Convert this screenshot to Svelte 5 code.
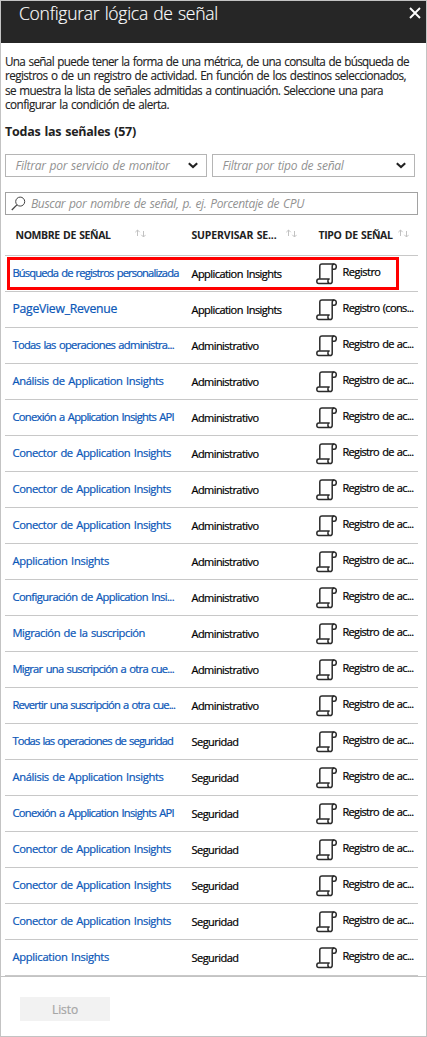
<script>
  const intro = [
    ['Una señal puede tener la forma de una métrica, de una consulta de búsqueda de', 404],
    ['registros o de un registro de actividad. En función de los destinos seleccionados,', 401],
    ['se muestra la lista de señales admitidas a continuación. Seleccione una para', 378],
    ['configurar la condición de alerta.', 164]
  ];
  const columns = [
    { label: 'NOMBRE DE SEÑAL', width: 95 },
    { label: 'SUPERVISAR SE...', width: 85 },
    { label: 'TIPO DE SEÑAL', width: 74 }
  ];
  const signals = [
    ['Todas las operaciones administra...', 161.5],
    ['Análisis de Application Insights', 151],
    ['Conexión a Application Insights API', 161.5],
    ['Conector de Application Insights', 158.5],
    ['Conector de Application Insights', 158.5],
    ['Conector de Application Insights', 158.5],
    ['Application Insights', 96.5],
    ['Configuración de Application Insi...', 161.5],
    ['Migración de la suscripción', 132.5],
    ['Migrar una suscripción a otra cue...', 161.5],
    ['Revertir una suscripción a otra cue...', 162.5]
  ];
  const security = [['Todas las operaciones de seguridad', 160.5], ...signals.slice(1, 7)];
  const monitors = { 'Application Insights': 90, Administrativo: 67, Seguridad: 47 };
  const kinds = { Registro: 38, 'Registro (cons...': 71, 'Registro de ac...': 71 };

  const rows = [
    { name: 'Búsqueda de registros personalizada', width: 166, monitor: 'Application Insights', kind: 'Registro', selected: true },
    { name: 'PageView_Revenue', width: 104.5, monitor: 'Application Insights', kind: 'Registro (cons...', large: true },
    ...signals.map(([name, width]) => ({ name, width, monitor: 'Administrativo', kind: 'Registro de ac...' })),
    ...security.map(([name, width]) => ({ name, width, monitor: 'Seguridad', kind: 'Registro de ac...' }))
  ];

  // Adjusts tracking so that a label takes up the given width.
  function fit(node, width) {
    const natural = node.getBoundingClientRect().width;
    node.style.letterSpacing = `${(width - natural) / node.textContent.length}px`;
  }
</script>

{#snippet chevron()}
  <svg class="chevron" width="10" height="7" viewBox="0 0 10 7"><path d="M.8 1.2 5 5 9.2 1.2" fill="none" stroke="#222" stroke-width="2.1" /></svg>
{/snippet}

<div class="blade">
  <header>
    <h1><span use:fit={199}>Configurar lógica de señal</span></h1>
    <svg class="close" width="12" height="12" viewBox="0 0 12 12"><path d="M1 1 11 11M11 1 1 11" stroke="#fff" stroke-width="1.9" /></svg>
  </header>

  <main>
    <div class="intro">
      {#each intro as [text, width]}
        <div><span use:fit={width}>{text}</span></div>
      {/each}
    </div>
    <h2><span use:fit={131}>Todas las señales (57)</span></h2>

    <div class="filters">
      <div class="field first"><span use:fit={154}>Filtrar por servicio de monitor</span>{@render chevron()}</div>
      <div class="field"><span use:fit={121}>Filtrar por tipo de señal</span>{@render chevron()}</div>
    </div>
    <div class="field search">
      <svg width="15" height="15" viewBox="0 0 15 15" fill="none" stroke="#444"><circle cx="9.2" cy="5.6" r="4.5" stroke-width="1" /><path d="M5.9 8.9 .8 14" stroke-width="1.3" /></svg>
      <span use:fit={273}>Buscar por nombre de señal, p. ej. Porcentaje de CPU</span>
    </div>

    <div class="head grid">
      {#each columns as column}
        <div class="cell">
          <span use:fit={column.width}>{column.label}</span>
          <svg class="sort" width="11" height="9" viewBox="0 0 11 9" fill="none" stroke="#c2c2c2" stroke-width="1"><path d="M2.5 7V1M.3 3.2 2.5 1 4.7 3.2M8.5 2v6M6.3 5.8 8.5 8l2.2-2.2" /></svg>
        </div>
      {/each}
    </div>

    {#each rows as row}
      <div class="row grid" class:selected={row.selected}>
        <div class="name" class:large={row.large}><span use:fit={row.width}>{row.name}</span></div>
        <div class="monitor"><span use:fit={monitors[row.monitor]}>{row.monitor}</span></div>
        <div class="kind">
          <svg width="21" height="22" viewBox="0 0 21 22" fill="none" stroke="#2b2b2b" stroke-width="1.5" stroke-linejoin="round">
            <path d="M3.8 15.8V3.2Q3.8 1 6 1H18.3" />
            <path d="M16.2 6.2H18.2A2.1 2.6 0 0 0 18.2 1Q16.2 1 16.2 3.4V18.2Q16.2 20.6 14 20.6" />
            <path d="M13.2 16H2.8Q.8 16 .8 18.3T2.8 20.6H14Q11.8 20 11.9 18T13.2 16Z" />
          </svg>
          <span use:fit={kinds[row.kind]}>{row.kind}</span>
        </div>
      </div>
    {/each}
  </main>

  <footer><button disabled><span use:fit={26}>Listo</span></button></footer>
</div>

<style>
  :global(body) { margin: 0; background: #fff; }
  .blade {
    box-sizing: border-box;
    width: 427px;
    height: 1037px;
    border: 1px solid #c3c3c3;
    display: flex;
    flex-direction: column;
    overflow: hidden;
    background: #fff;
    color: #222;
    font-family: "Open Sans", "Noto Sans", sans-serif;
    font-size: 11.2px;
    white-space: nowrap;
    word-spacing: 1px;
  }
  svg { display: block; flex: none; }
  h1, h2 { margin: 0; }
  header {
    height: 42px;
    flex: none;
    display: flex;
    justify-content: space-between;
    align-items: flex-start;
    padding: 0 5px 0 18px;
    background: #262626;
    color: #fff;
  }
  h1 { font-size: 17.5px; font-weight: 300; line-height: 25px; -webkit-text-stroke: 0.15px; }
  .close { margin-top: 6px; }
  main { flex: 1; min-height: 0; padding: 11px 8px 0 4px; }
  .intro { font-size: 11.7px; line-height: 14.33px; -webkit-text-stroke: 0.12px; }
  h2 { margin-top: 11px; font-size: 12.5px; line-height: 19px; font-weight: 700; }
  .filters { display: flex; gap: 5px; margin-top: 13px; }
  .field {
    box-sizing: border-box;
    width: 203px;
    height: 23px;
    display: flex;
    align-items: center;
    justify-content: space-between;
    padding: 0 8px 0 10px;
    border: 1px solid #b5b5b5;
    color: #929292;
    font-size: 12px;
    font-style: italic;
    line-height: 20px;
  }
  .first { width: 202px; }
  .search { width: 413px; margin-top: 15px; justify-content: flex-start; gap: 5px; padding-left: 5px; border-color: #a2a2a2; }
  .first span, .field:nth-child(2) span { margin-left: -0.5px; }
  .grid { display: grid; grid-template-columns: 186.5px 124.5px 102px; }
  .head { height: 40px; font-size: 10.5px; font-weight: 700; line-height: 40px; }
  .cell { display: flex; }
  .cell:nth-child(1) { padding-left: 10.5px; gap: 24.5px; }
  .cell:nth-child(2) { gap: 9.5px; }
  .cell:nth-child(3) { padding-left: 2.5px; gap: 5.5px; }
  .sort { margin-top: 14px; }
  .row { position: relative; height: 36px; box-sizing: border-box; border-top: 1px solid #c8c8c8; color: #000; -webkit-text-stroke: 0.22px; }
  .row:last-child { height: 37px; border-bottom: 1px solid #c8c8c8; }
  .selected::after { content: ""; position: absolute; left: 2px; top: 1px; width: 386px; height: 27px; border: 3px solid #f00; }
  .name { padding-left: 7.5px; color: #0b57b8; line-height: 34px; }
  .large { font-size: 12.2px; }
  .monitor { font-size: 11px; line-height: 36px; }
  .kind { display: flex; gap: 5.5px; font-size: 11px; line-height: 32px; }
  .kind svg { margin-top: 7px; }
  footer { box-sizing: border-box; height: 60px; flex: none; border-top: 1px solid #c3c3c3; padding: 20px 19px 0; }
  button { display: block; width: 90px; height: 24px; padding: 0; border: 0; background: #f2f2f2; color: #a6a6a6; font: 12px/26px "Open Sans", "Noto Sans", sans-serif; -webkit-text-stroke: 0.2px; }
</style>
